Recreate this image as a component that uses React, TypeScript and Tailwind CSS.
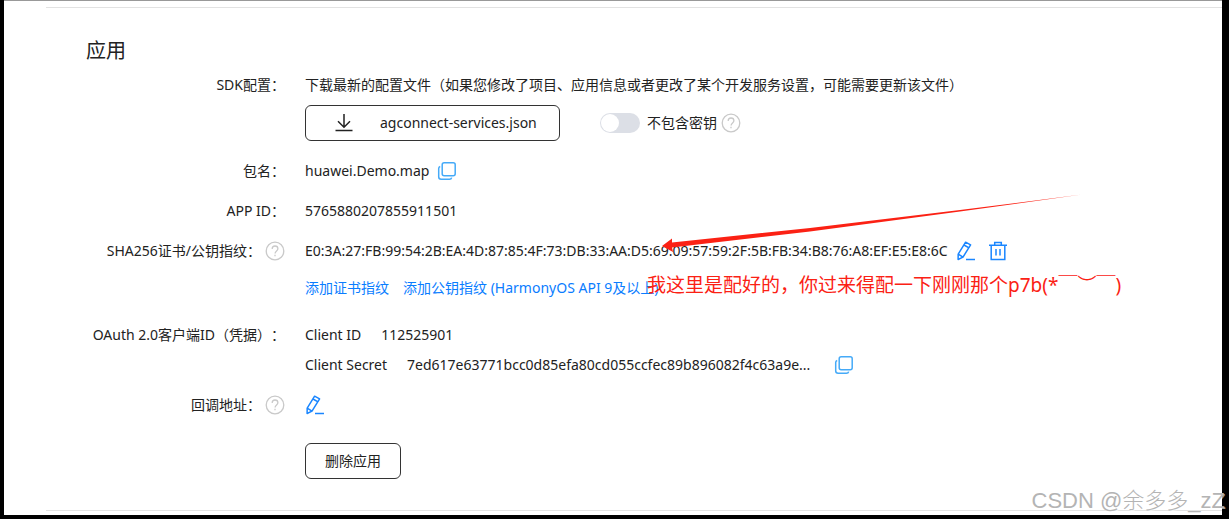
import type { ReactNode } from "react";

function HelpIcon() {
  return (
    <svg className="size-5 shrink-0 text-[#c9c9c9]" viewBox="0 0 20 20" fill="none" stroke="currentColor" strokeWidth="1.3" role="img" aria-label="帮助">
      <circle cx="10" cy="10" r="8.8" />
      <path d="M7.200 8C7.200 6.200 8.400 5 10 5s2.900 1.200 2.900 2.800c0 2-2.800 2.300-2.800 4.600" />
      <path d="M10 13.700v1.600" />
    </svg>
  );
}

function CopyIcon() {
  return (
    <svg className="size-5" viewBox="0 0 20 20" fill="none" stroke="#45aaf8" strokeWidth="1.5" aria-hidden="true">
      <rect x="5.2" y="1.7" width="13" height="13" rx="2" />
      <path d="M3.200 5.400C2 5.700 1.700 6.400 1.700 7.400v8.300c0 1.600.7 2.500 2.400 2.500h8.400c1.200 0 1.900-.4 2.200-1.600" />
    </svg>
  );
}

function PencilIcon() {
  return (
    <svg className="size-5" viewBox="0 0 20 20" fill="none" stroke="#1a86ff" strokeWidth="1.5" strokeLinejoin="round" aria-hidden="true">
      <path d="M9.600 1.200l5 2.700-7.600 12.200-4.900 2.400.1-5.400z" />
      <path d="M8 4l5 2.800M2.200 13.100l4.800 3" />
      <path d="M10 18.500h9" />
    </svg>
  );
}

function TrashIcon() {
  return (
    <svg className="size-5" viewBox="0 0 20 20" fill="none" stroke="#1a86ff" strokeWidth="1.5" aria-hidden="true">
      <path d="M1 4.200h18M6.700 4V1.500h6.600V4M3.200 4.500v14h13.600v-14" />
      <path d="M8 8v6.500M12 8v6.500" />
    </svg>
  );
}

function DownloadIcon() {
  return (
    <svg className="size-5" viewBox="0 0 20 20" fill="none" stroke="#222" strokeWidth="1.5" aria-hidden="true">
      <path d="M10 1v13M4 8.200l6 6 6-6M1.500 17.500h17" />
    </svg>
  );
}

function IconButton({ label, children }: { label: string; children: ReactNode }) {
  return (
    <button type="button" aria-label={label} className="flex shrink-0 cursor-pointer">
      {children}
    </button>
  );
}

function Label({ children, help }: { children: ReactNode; help?: boolean }) {
  return (
    <dt className="flex w-[239px] shrink-0 items-center justify-end gap-1 whitespace-nowrap [text-spacing-trim:space-all]">
      {children}
      {help && <HelpIcon />}
    </dt>
  );
}

function Row({ label, help, children }: { label: string; help?: boolean; children: ReactNode }) {
  return (
    <div className="flex h-10 items-center gap-5">
      <Label help={help}>{label}</Label>
      <dd className="flex items-center gap-2 whitespace-nowrap">{children}</dd>
    </div>
  );
}

export default function App() {
  return (
    <div className="relative min-h-screen overflow-hidden bg-black pr-[7px] pb-1 pl-1 font-['Noto_Sans','Noto_Sans_CJK_SC',sans-serif] text-sm text-[#222]">
      <main className="border-t border-[#999] bg-white pt-1.5 pb-1 pl-[42px]">
        <section className="border-y border-[#e2e2e2] pt-[29px] pb-[31px]">
          <h1 className="pl-10 text-xl leading-7">应用</h1>
          <dl className="pt-1.5">
            <div className="flex gap-5">
              <Label>
                <span className="self-start leading-7">SDK配置：</span>
              </Label>
              <dd className="whitespace-nowrap">
                <p className="leading-7">
                  下载最新的配置文件（如果您修改了项目、应用信息或者更改了某个开发服务设置，可能需要更新该文件）
                </p>
                <div className="flex items-center gap-10 pt-1.5">
                  <button type="button" className="flex h-9 w-[255px] cursor-pointer items-center gap-[26px] rounded-md border border-[#333] pl-7">
                    <DownloadIcon />
                    agconnect-services.json
                  </button>
                  <div className="flex items-center gap-1">
                    <label className="flex cursor-pointer items-center gap-[7px]">
                      <input
                        type="checkbox"
                        role="switch"
                        className="h-5 w-10 appearance-none rounded-full bg-[#dcdfe6] p-px before:block before:size-[18px] before:rounded-full before:bg-white checked:bg-[#1a86ff] checked:before:ml-5"
                      />
                      不包含密钥
                    </label>
                    <HelpIcon />
                  </div>
                </div>
              </dd>
            </div>
            <div className="pt-2.5">
              <Row label="包名：">
                huawei.Demo.map
                <IconButton label="复制包名">
                  <CopyIcon />
                </IconButton>
              </Row>
              <Row label="APP ID：">5765880207855911501</Row>
              <Row label="SHA256证书/公钥指纹：" help>
                <span>
                  E0:3A:27:FB:99:54:2B:EA:4D:87:85:4F:73:DB:33:AA:D5:69:09:57:59:2F:5B:FB:34:B8:76:A8:EF:E5:E8:6C
                </span>
                <IconButton label="编辑指纹">
                  <PencilIcon />
                </IconButton>
                <span className="pl-1">
                  <IconButton label="删除指纹">
                    <TrashIcon />
                  </IconButton>
                </span>
              </Row>
            </div>
            <dd className="flex gap-3.5 pt-[5px] pl-[259px] leading-6 text-[#0a7dff]">
              <a href="#certificate">添加证书指纹</a>
              <a href="#public-key">添加公钥指纹 (HarmonyOS API 9及以上)</a>
            </dd>
            <div className="flex gap-5 pt-5 leading-[30px]">
              <Label>
                <span className="self-start">OAuth 2.0客户端ID（凭据）：</span>
              </Label>
              <dd className="whitespace-nowrap">
                <p className="flex gap-5">
                  <span>Client ID</span>
                  <span>112525901</span>
                </p>
                <div className="flex items-center gap-5">
                  <span>Client Secret</span>
                  <span className="flex items-center gap-6">
                    7ed617e63771bcc0d85efa80cd055ccfec89b896082f4c63a9e...
                    <IconButton label="复制密钥">
                      <CopyIcon />
                    </IconButton>
                  </span>
                </div>
              </dd>
            </div>
            <div className="pt-[5px]">
              <Row label="回调地址：" help>
                <IconButton label="编辑回调地址">
                  <PencilIcon />
                </IconButton>
              </Row>
            </div>
          </dl>
          <div className="pt-[18px] pl-[259px]">
            <button type="button" className="h-9 w-24 cursor-pointer rounded-md border border-[#333]">
              删除应用
            </button>
          </div>
        </section>
      </main>

      <svg className="pointer-events-none absolute top-48 left-[660px] h-16 w-[430px]" viewBox="0 0 430 64" aria-hidden="true">
        <path d="M2 54L12 46.500L12 50.500L150 36L300 18L422 2.500L300 19.500L150 39.500L12 55.500L13 60Z" fill="#fb2114" />
      </svg>
      <p className="pointer-events-none absolute top-[271px] left-[647px] text-[19px] leading-7 whitespace-nowrap text-[#fb2114]">
        我这里是配好的，你过来得配一下刚刚那个p7b(*￣︶￣)
      </p>
      <p className="pointer-events-none absolute right-1 bottom-0 text-[22px] leading-9 font-light whitespace-nowrap text-[#b4b4b4] font-['Liberation_Sans','Noto_Sans_CJK_SC',sans-serif] [text-shadow:1px_1px_0_#ffffff99]">
        CSDN @余多多_zZ
      </p>
    </div>
  );
}
